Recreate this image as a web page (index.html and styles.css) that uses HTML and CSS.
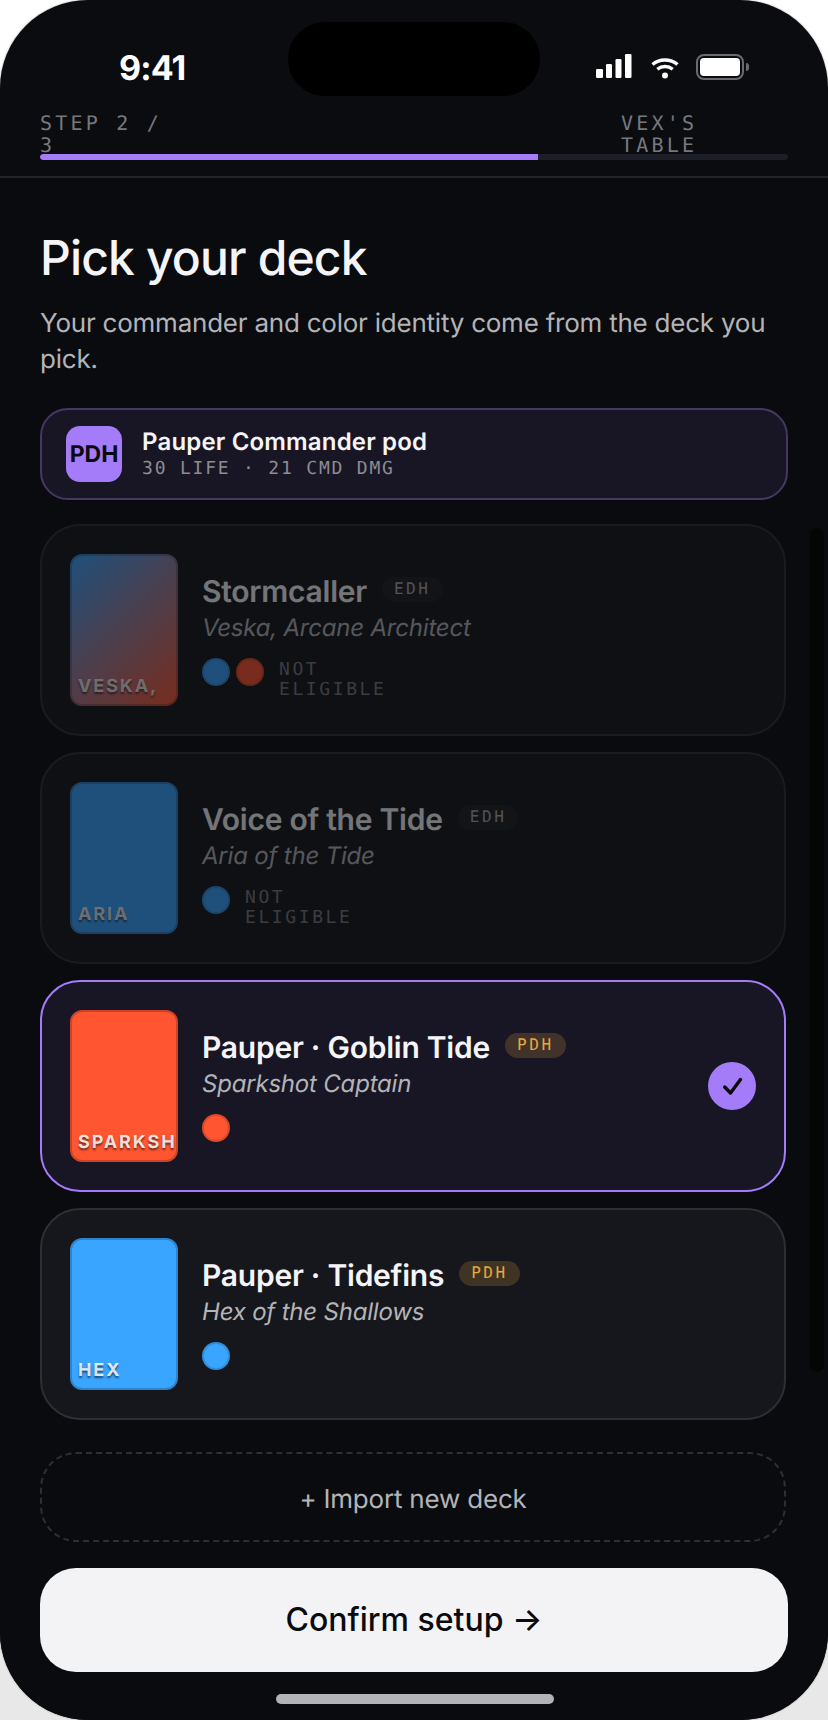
FILE: index.html
```html
<!DOCTYPE html>
<html lang="en">
<head>
<meta charset="utf-8">
<title>Pick your deck</title>
<link rel="stylesheet" href="styles.css">
</head>
<body>
<div class="phone">
  <div class="island"></div>
  <div class="scroll-thumb"></div>
  <div class="status">
    <span class="time">9:41</span>
    <div class="status-icons">
      <svg class="signal" width="36" height="24" viewBox="0 0 36 24" aria-hidden="true"><rect x="0" y="15" width="7" height="9" rx="1.2"/><rect x="10" y="10" width="6" height="14" rx="1.2"/><rect x="19.5" y="5" width="6" height="19" rx="1.2"/><rect x="29" y="0" width="6.500" height="24" rx="1.2"/></svg>
      <svg class="wifi" width="28" height="22" viewBox="0 0 28 22" aria-hidden="true"><path d="M1.500 7.500C8.500 1.500 19.500 1.500 26.500 7.500" /><path d="M6.300 12.300C10.800 8.600 17.200 8.600 21.700 12.300"/><circle cx="14" cy="18.500" r="3"/></svg>
      <div class="battery"><div class="battery-fill"></div><div class="battery-tip"></div></div>
    </div>
  </div>
  <header class="progress-head">
    <div class="progress-labels">
      <span class="mono-label step-label">STEP 2 / 3</span>
      <span class="mono-label table-label">VEX'S TABLE</span>
    </div>
    <div class="bar"><div class="bar-fill"></div></div>
  </header>
  <main class="content">
    <h1 class="title">Pick your deck</h1>
    <p class="desc">Your commander and color identity come from the deck you pick.</p>
    <div class="pod">
      <div class="pod-icon">PDH</div>
      <div class="pod-text">
        <div class="pod-name">Pauper Commander pod</div>
        <div class="pod-sub">30 LIFE · 21 CMD DMG</div>
      </div>
    </div>
    <div class="deck-list">
      <article class="deck deck-off">
        <div class="thumb thumb-storm"><span class="thumb-label">VESKA,</span></div>
        <div class="deck-body">
          <div class="deck-head"><span class="deck-name">Stormcaller</span><span class="tag tag-edh">EDH</span></div>
          <div class="deck-cmd">Veska, Arcane Architect</div>
          <div class="deck-meta"><span class="dot dot-blue"></span><span class="dot dot-red"></span><span class="not-eligible">NOT ELIGIBLE</span></div>
        </div>
      </article>
      <article class="deck deck-off">
        <div class="thumb thumb-blue"><span class="thumb-label">ARIA</span></div>
        <div class="deck-body">
          <div class="deck-head"><span class="deck-name">Voice of the Tide</span><span class="tag tag-edh">EDH</span></div>
          <div class="deck-cmd">Aria of the Tide</div>
          <div class="deck-meta"><span class="dot dot-blue"></span><span class="not-eligible">NOT ELIGIBLE</span></div>
        </div>
      </article>
      <article class="deck deck-selected">
        <div class="thumb thumb-red"><span class="thumb-label">SPARKSH</span></div>
        <div class="deck-body">
          <div class="deck-head"><span class="deck-name">Pauper · Goblin Tide</span><span class="tag tag-pdh">PDH</span></div>
          <div class="deck-cmd">Sparkshot Captain</div>
          <div class="deck-meta"><span class="dot dot-red"></span></div>
        </div>
        <div class="check">
          <svg width="24" height="24" viewBox="0 0 24 24" aria-hidden="true"><path d="M4.700 13L10.500 19L20.500 5.500"/></svg>
        </div>
      </article>
      <article class="deck">
        <div class="thumb thumb-blue"><span class="thumb-label">HEX</span></div>
        <div class="deck-body">
          <div class="deck-head"><span class="deck-name">Pauper · Tidefins</span><span class="tag tag-pdh">PDH</span></div>
          <div class="deck-cmd">Hex of the Shallows</div>
          <div class="deck-meta"><span class="dot dot-blue"></span></div>
        </div>
      </article>
    </div>
    <div class="import">+ Import new deck</div>
    <button class="confirm" type="button">Confirm setup →</button>
    <div class="home-indicator"></div>
  </main>
</div>
</body>
</html>
```
FILE: styles.css
```css
* { box-sizing: border-box; }
html, body { margin: 0; padding: 0; }
body {
  width: 828px;
  height: 1720px;
  overflow: hidden;
  background: linear-gradient(180deg, #ffffff 0%, #e8e8e8 100%);
  font-family: Inter, "Liberation Sans", sans-serif;
  text-rendering: geometricPrecision;
}
.phone {
  position: relative;
  width: 828px;
  height: 1720px;
  border-radius: 88px;
  overflow: hidden;
  background: #0b0c10;
  color: #f3f3f5;
  box-shadow: 0 0 2px rgba(0, 0, 0, .4);
  display: flex;
  flex-direction: column;
}
.island {
  position: absolute;
  left: 288px;
  top: 22px;
  width: 252px;
  height: 74px;
  border-radius: 37px;
  background: #000;
}
.scroll-thumb {
  position: absolute;
  left: 810px;
  top: 528px;
  width: 14px;
  height: 844px;
  border-radius: 7px;
  background: #050506;
}
.status {
  height: 112px;
  padding: 47px 84px 0 119px;
  display: flex;
  justify-content: space-between;
  align-items: flex-start;
}
.time {
  font-size: 34px;
  font-weight: 700;
  line-height: 44px;
  color: #fff;
  letter-spacing: -0.9px;
}
.status-icons {
  display: flex;
  align-items: flex-start;
  padding-top: 7px;
}
.signal { fill: #fff; margin-right: 19px; }
.wifi { margin: 3px 17px 0 0; fill: #fff; stroke: none; }
.wifi path { fill: none; stroke: #fff; stroke-width: 3.4; }
.battery {
  position: relative;
  width: 48px;
  height: 26px;
  border: 2px solid #6a6b70;
  border-radius: 8px;
  padding: 2px;
}
.battery-fill { width: 100%; height: 100%; background: #fff; border-radius: 4px; }
.battery-tip {
  position: absolute;
  right: -7px;
  top: 7px;
  width: 3px;
  height: 8px;
  background: #6a6b70;
  border-radius: 0 3px 3px 0;
}
.progress-head {
  padding: 0 40px 16px;
  border-bottom: 2px solid #232428;
}
.progress-labels {
  display: grid;
  grid-template-columns: 581px 80px;
  height: 42px;
}
.mono-label {
  font-family: "DejaVu Sans Mono", monospace;
  font-size: 20px;
  line-height: 22px;
  letter-spacing: 3.2px;
  color: #77787c;
}
.step-label { width: 130px; }
.bar {
  height: 6px;
  border-radius: 3px;
  background: #1c1d26;
  overflow: hidden;
}
.bar-fill { width: 66.6%; height: 100%; background: #a47cfa; border-radius: 3px 0 0 3px; }
.content {
  flex: 1;
  padding: 50px 40px 0;
  display: flex;
  flex-direction: column;
  background: #0a0b0f;
}
.title {
  margin: 0;
  font-size: 48px;
  font-weight: 500;
  line-height: 60px;
  letter-spacing: -0.85px;
  color: #f5f5f7;
}
.desc {
  margin: 18px 0 0;
  font-size: 26px;
  line-height: 36px;
  letter-spacing: -0.23px;
  color: #b3b4b8;
}
.pod {
  margin-top: 30px;
  height: 92px;
  padding: 0 24px;
  display: flex;
  align-items: center;
  gap: 20px;
  border: 2px solid #463763;
  border-radius: 28px;
  background: #181624;
}
.pod-icon {
  width: 56px;
  height: 56px;
  border-radius: 14px;
  background: #a47cfa;
  color: #0a0b0f;
  font-size: 23px;
  font-weight: 700;
  display: flex;
  align-items: center;
  justify-content: center;
}
.pod-name {
  font-size: 24px;
  font-weight: 600;
  line-height: 28px;
  letter-spacing: 0.17px;
  color: #f5f5f7;
}
.pod-sub {
  margin-top: 2px;
  font-family: "DejaVu Sans Mono", monospace;
  font-size: 18px;
  line-height: 22px;
  letter-spacing: 1.8px;
  color: #8c8c92;
}
.deck-list {
  margin-top: 24px;
  width: 746px;
  display: flex;
  flex-direction: column;
  gap: 16px;
}
.deck {
  height: 212px;
  padding: 28px;
  display: flex;
  align-items: flex-start;
  gap: 24px;
  border: 2px solid #2e2f34;
  border-radius: 40px;
  background: #16171c;
}
.deck-off { opacity: .45; }
.deck-selected { background: #181624; border-color: #a47cfa; }
.thumb {
  position: relative;
  flex: none;
  width: 108px;
  height: 152px;
  border: 2px solid rgba(0, 0, 0, .2);
  border-radius: 12px;
  padding: 0 0 6px 6px;
  display: flex;
  align-items: flex-end;
  overflow: hidden;
  background-origin: border-box;
}
.thumb-storm { background-image: linear-gradient(135deg, #3aa5ff, #ff5530); }
.thumb-blue { background-color: #3aa5ff; }
.thumb-red { background-color: #ff5530; }
.thumb-label {
  font-size: 18px;
  font-weight: 700;
  line-height: 22px;
  letter-spacing: 1.9px;
  white-space: nowrap;
  color: rgba(255, 255, 255, .85);
  text-shadow: 0 2px 2px rgba(0, 0, 0, .55);
}
.deck-body { padding-top: 21px; flex: none; }
.deck-head { display: flex; align-items: center; gap: 15px; height: 34px; }
.deck-name {
  font-size: 30px;
  font-weight: 600;
  line-height: 34px;
  letter-spacing: -0.25px;
  color: #f5f5f7;
}
.tag {
  height: 25px;
  padding: 0 12px;
  border-radius: 13px;
  margin-top: -5px;
  font-family: "DejaVu Sans Mono", monospace;
  font-size: 16px;
  line-height: 24px;
  letter-spacing: 2.6px;
}
.tag-edh { background: #1e1f24; color: #a9aaae; }
.tag-pdh { background: rgba(232, 168, 63, .2); color: #e8a83f; }
.deck-cmd {
  margin-top: 4px;
  font-size: 24px;
  font-style: italic;
  line-height: 30px;
  letter-spacing: -0.2px;
  color: #b3b4b8;
}
.deck-meta { margin-top: 15px; display: flex; align-items: flex-start; gap: 6px; }
.dot {
  flex: none;
  width: 28px;
  height: 28px;
  border-radius: 50%;
  border: 2px solid rgba(0, 0, 0, .15);
}
.dot-blue { background: #3aa5ff; }
.dot-red { background: #ff5530; }
.not-eligible {
  width: 120px;
  margin-left: 9px;
  padding-top: 2px;
  font-family: "DejaVu Sans Mono", monospace;
  font-size: 18px;
  line-height: 20px;
  letter-spacing: 2.6px;
  color: #77787c;
}
.check {
  flex: none;
  margin-left: auto;
  align-self: center;
  width: 48px;
  height: 48px;
  border-radius: 50%;
  background: #a47cfa;
  display: flex;
  align-items: center;
  justify-content: center;
}
.check path { fill: none; stroke: #0a0b0f; stroke-width: 3.4; stroke-linecap: round; stroke-linejoin: round; }
.import {
  margin-top: 32px;
  width: 746px;
  height: 90px;
  padding-top: 5px;
  border: 2px dashed #2e2f34;
  border-radius: 36px;
  display: flex;
  align-items: center;
  justify-content: center;
  font-size: 26px;
  letter-spacing: -0.2px;
  color: #b3b4b8;
}
.confirm {
  margin-top: 26px;
  height: 104px;
  padding: 0 0 2px;
  border: 0;
  border-radius: 36px;
  background: #f3f3f5;
  color: #0a0b0f;
  font-family: inherit;
  font-size: 32px;
  font-weight: 500;
}
.home-indicator {
  margin: 22px 0 0 236px;
  width: 278px;
  height: 10px;
  border-radius: 5px;
  background: #b2b3b6;
}
```
